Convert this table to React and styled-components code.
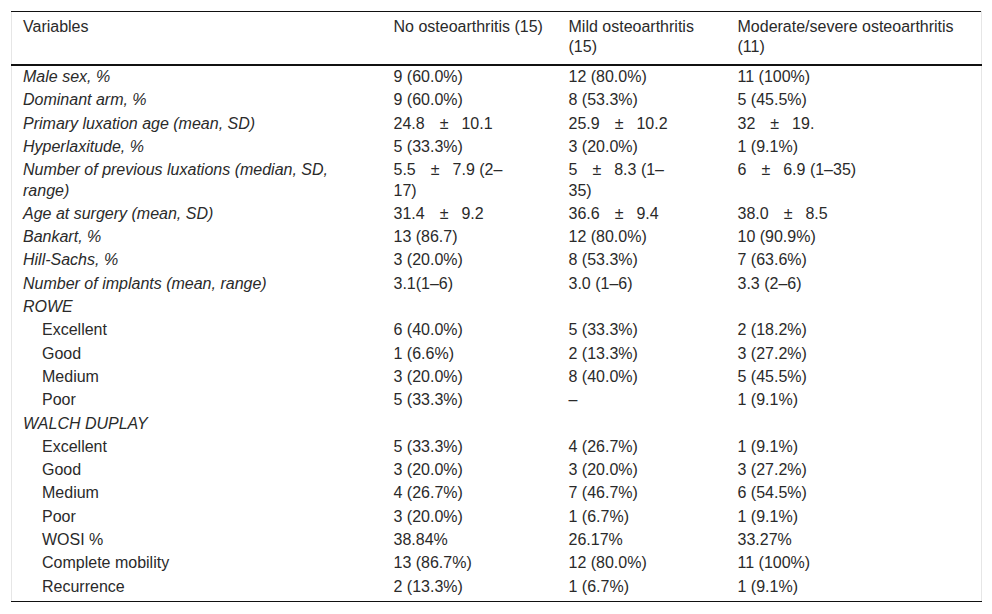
import React from "react";
import styled, { createGlobalStyle } from "styled-components";

const GlobalStyle = createGlobalStyle`
  body {
    margin: 0;
    background: #fff;
    font-family: "Liberation Sans", Arial, sans-serif;
    color: #2a2a2a;
  }
`;

const rows = [
  { label: "Male sex, %", values: ["9 (60.0%)", "12 (80.0%)", "11 (100%)"] },
  { label: "Dominant arm, %", values: ["9 (60.0%)", "8 (53.3%)", "5 (45.5%)"] },
  {
    label: "Primary luxation age (mean, SD)",
    values: [["24.8", "10.1"], ["25.9", "10.2"], ["32", "19."]],
  },
  { label: "Hyperlaxitude, %", values: ["5 (33.3%)", "3 (20.0%)", "1 (9.1%)"] },
  {
    label: ["Number of previous luxations (median, SD,", "range)"],
    values: [["5.5", "7.9 (2–", "17)"], ["5", "8.3 (1–", "35)"], ["6", "6.9 (1–35)"]],
  },
  { label: "Age at surgery (mean, SD)", values: [["31.4", "9.2"], ["36.6", "9.4"], ["38.0", "8.5"]] },
  { label: "Bankart, %", values: ["13 (86.7)", "12 (80.0%)", "10 (90.9%)"] },
  { label: "Hill-Sachs, %", values: ["3 (20.0%)", "8 (53.3%)", "7 (63.6%)"] },
  { label: "Number of implants (mean, range)", values: ["3.1(1–6)", "3.0 (1–6)", "3.3 (2–6)"] },
  { label: "ROWE", section: true },
  { label: "Excellent", sub: true, values: ["6 (40.0%)", "5 (33.3%)", "2 (18.2%)"] },
  { label: "Good", sub: true, values: ["1 (6.6%)", "2 (13.3%)", "3 (27.2%)"] },
  { label: "Medium", sub: true, values: ["3 (20.0%)", "8 (40.0%)", "5 (45.5%)"] },
  { label: "Poor", sub: true, values: ["5 (33.3%)", "–", "1 (9.1%)"] },
  { label: "WALCH DUPLAY", section: true },
  { label: "Excellent", sub: true, values: ["5 (33.3%)", "4 (26.7%)", "1 (9.1%)"] },
  { label: "Good", sub: true, values: ["3 (20.0%)", "3 (20.0%)", "3 (27.2%)"] },
  { label: "Medium", sub: true, values: ["4 (26.7%)", "7 (46.7%)", "6 (54.5%)"] },
  { label: "Poor", sub: true, values: ["3 (20.0%)", "1 (6.7%)", "1 (9.1%)"] },
  { label: "WOSI %", sub: true, values: ["38.84%", "26.17%", "33.27%"] },
  { label: "Complete mobility", sub: true, values: ["13 (86.7%)", "12 (80.0%)", "11 (100%)"] },
  { label: "Recurrence", sub: true, values: ["2 (13.3%)", "1 (6.7%)", "1 (9.1%)"] },
];

const Value = ({ value }) => {
  if (!Array.isArray(value)) return value;
  const [mean, sd, rest] = value;
  return (
    <>
      {mean}
      <Pm>±</Pm>
      {sd}
      {rest && (
        <>
          <br />
          {rest}
        </>
      )}
    </>
  );
};

const Label = ({ label }) =>
  Array.isArray(label) ? (
    <>
      {label[0]}
      <br />
      {label[1]}
    </>
  ) : (
    label
  );

const App = () => {
  return (
    <Page>
      <GlobalStyle />
      <Table>
        <colgroup>
          <col style={{ width: 371 }} />
          <col style={{ width: 175 }} />
          <col style={{ width: 169 }} />
          <col />
        </colgroup>
        <thead>
          <tr>
            <Th>Variables</Th>
            <Th>No osteoarthritis (15)</Th>
            <Th>
              Mild osteoarthritis
              <br />
              (15)
            </Th>
            <Th>
              Moderate/severe osteoarthritis
              <br />
              (11)
            </Th>
          </tr>
        </thead>
        <tbody>
          {rows.map((row, i) => (
            <tr key={i}>
              <LabelCell $sub={row.sub}>
                <Label label={row.label} />
              </LabelCell>
              {(row.values || ["", "", ""]).map((v, j) => (
                <Td key={j}>
                  <Value value={v} />
                </Td>
              ))}
            </tr>
          ))}
          <Spacer>
            <td colSpan={4} />
          </Spacer>
        </tbody>
      </Table>
    </Page>
  );
};

export default App;

const Page = styled.div`
  padding: 11px 0 0 11px;
`;

const Table = styled.table`
  width: 971px;
  border-collapse: collapse;
  table-layout: fixed;
  font-size: 16px;
  line-height: 20.3px;
  border-top: 1px solid #111;
  border-bottom: 1px solid #111;
  border-left: 1px solid #e6e6e6;
  border-right: 1px solid #e6e6e6;
`;

const Th = styled.th`
  text-align: left;
  font-weight: normal;
  vertical-align: top;
  padding: 5px 11px 6px 11px;
  border-bottom: 2px solid #111;
`;

const Td = styled.td`
  vertical-align: top;
  padding: 1.5px 11px;
  white-space: nowrap;
`;

const LabelCell = styled(Td)`
  font-style: ${({ $sub }) => ($sub ? "normal" : "italic")};
  padding-left: ${({ $sub }) => ($sub ? "30px" : "11px")};
`;

const Pm = styled.span`
  margin: 0 13px 0 15px;
`;

const Spacer = styled.tr`
  height: 3px;
`;
